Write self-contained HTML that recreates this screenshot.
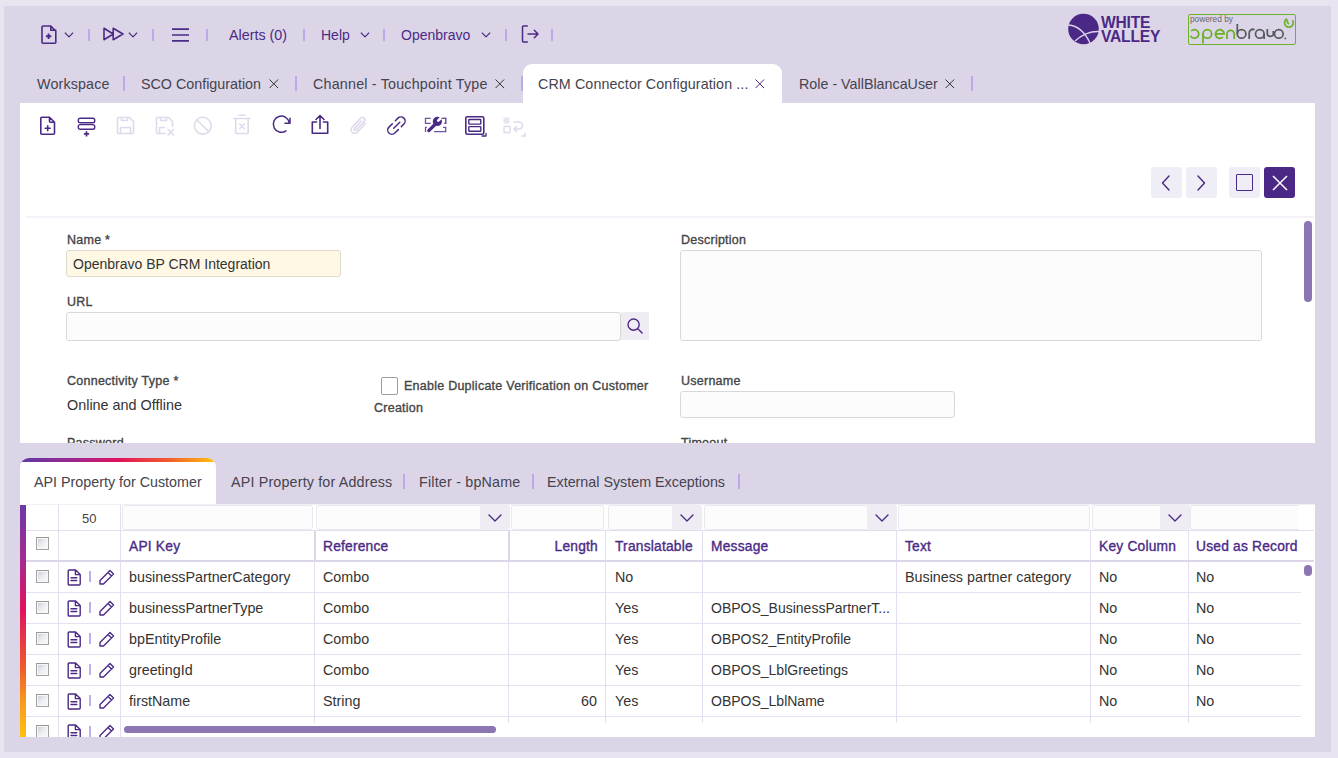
<!DOCTYPE html>
<html><head><meta charset="utf-8">
<style>
*{box-sizing:border-box;margin:0;padding:0}
html,body{width:1338px;height:758px;overflow:hidden}
body{background:#e9e4f0;font-family:"Liberation Sans",sans-serif;position:relative;color:#333}
.a{position:absolute}
#main{left:4px;top:6px;width:1327px;height:746px;background:#dcd5e7}
.sep{position:absolute;width:2px;height:12px;background:#bda9e6}
.mtxt{position:absolute;font-size:14px;color:#4b2a86;white-space:nowrap;line-height:16px}
.ttxt{position:absolute;font-size:14.3px;color:#45434e;white-space:nowrap;line-height:16px}
svg{position:absolute;overflow:visible}
.ic{fill:none;stroke:#4b2a86;stroke-width:1.6;stroke-linecap:round;stroke-linejoin:round}
.dis{fill:none;stroke:#dfd9eb;stroke-width:1.6;stroke-linecap:round;stroke-linejoin:round}
#content{left:20px;top:103px;width:1295px;height:340px;background:#fff;overflow:hidden}
.lbl{position:absolute;font-size:12.5px;color:#454545;-webkit-text-stroke:0.35px #454545;white-space:nowrap;line-height:14px;letter-spacing:0.25px}
.fld{position:absolute;background:#fcfcfc;border:1px solid #d8d8d8;border-radius:3px}
.val{position:absolute;font-size:14px;color:#333;white-space:nowrap;line-height:16px}
#grid{left:20px;top:504px;width:1295px;height:233px;background:#fff;overflow:hidden}
.hl{position:absolute;height:1px;background:#e6e1f1}
.vl{position:absolute;width:1px;background:#e6e1f1}
.hd{position:absolute;font-size:13.8px;color:#4b2a86;-webkit-text-stroke:0.35px #4b2a86;white-space:nowrap;line-height:16px;letter-spacing:0.2px}
.cell{position:absolute;font-size:14.3px;color:#333;white-space:nowrap;line-height:16px}
.cb{position:absolute;width:13px;height:13px;border:1px solid #a3a3a3;border-top-color:#999;background:linear-gradient(135deg,#c7ccd6,#eef0f3 55%,#fafafa);box-shadow:inset 0 0 0 1px #f7f7f7}
.flt{position:absolute;top:1px;height:25px;background:#fcfcfc;border:1px solid #e8e8ec;border-radius:3px}
.dd{position:absolute;top:1px;height:25px;background:#efecf4}
</style></head>
<body>
<div id="main" class="a"></div>

<!-- TOP MENU -->
<svg style="left:40px;top:25px" width="18" height="19" viewBox="0 0 18 19"><path class="ic" d="M2 2a1 1 0 0 1 1-1h7.8l5 5v11.3a1 1 0 0 1-1 1H3a1 1 0 0 1-1-1z M10.8 1v4.3h5"/><path class="ic" style="stroke-width:1.9;stroke-linecap:butt" d="M8.6 8.6v5.4 M5.9 11.3h5.4"/></svg>
<svg style="left:64px;top:32px" width="10" height="6" viewBox="0 0 10 6"><path class="ic" style="stroke-width:1.1" d="M1.2 1l3.8 3.8 3.8-3.8"/></svg>
<div class="sep" style="left:88px;top:29px"></div>
<svg style="left:103px;top:27px" width="21" height="14" viewBox="0 0 21 14"><path class="ic" d="M1 1.3l9.2 5.7L1 12.7z M10.2 1.3l9.8 5.7-9.8 5.7z"/></svg>
<svg style="left:128px;top:32px" width="10" height="6" viewBox="0 0 10 6"><path class="ic" style="stroke-width:1.1" d="M1.2 1l3.8 3.8 3.8-3.8"/></svg>
<div class="sep" style="left:152px;top:29px"></div>
<svg style="left:172px;top:28px" width="17" height="14" viewBox="0 0 17 14"><path class="ic" style="stroke-width:1.7;stroke-linecap:butt" d="M0 1.2h17 M0 7h17 M0 12.8h17"/></svg>
<div class="sep" style="left:206px;top:29px"></div>
<div class="mtxt" style="left:229px;top:27px;font-size:14.3px">Alerts (0)</div>
<div class="sep" style="left:303px;top:29px"></div>
<div class="mtxt" style="left:321px;top:27px">Help</div>
<svg style="left:360px;top:32px" width="10" height="6" viewBox="0 0 10 6"><path class="ic" style="stroke-width:1.1" d="M1.2 1l3.8 3.8 3.8-3.8"/></svg>
<div class="sep" style="left:383px;top:29px"></div>
<div class="mtxt" style="left:401px;top:27px">Openbravo</div>
<svg style="left:481px;top:32px" width="10" height="6" viewBox="0 0 10 6"><path class="ic" style="stroke-width:1.1" d="M1.2 1l3.8 3.8 3.8-3.8"/></svg>
<div class="sep" style="left:505px;top:29px"></div>
<svg style="left:521px;top:25px" width="18" height="18" viewBox="0 0 18 18"><path class="ic" style="stroke-width:1.5" d="M6.3 1H2.5a1 1 0 0 0-1 1v14a1 1 0 0 0 1 1h3.8 M7 9h10 M13.3 5.3L17 9l-3.7 3.7"/></svg>
<div class="sep" style="left:551px;top:29px"></div>

<!-- LOGOS -->
<svg style="left:1068px;top:13px" width="32" height="32" viewBox="0 0 32 32">
<circle cx="15.5" cy="16" r="15.3" fill="#4b2886"/>
<path d="M0.5 12 Q14 13 22 30" stroke="#dcd5e7" stroke-width="1.3" fill="none"/>
<path d="M7 28 Q18 18 31 18.5" stroke="#dcd5e7" stroke-width="1.3" fill="none"/>
</svg>
<div class="a" style="left:1101px;top:16px;font-size:15.6px;font-weight:bold;color:#4b2886;line-height:14px;letter-spacing:-0.2px">WHITE<br>VALLEY</div>
<div class="a" style="left:1188px;top:14px;width:108px;height:31px;border:1px solid #6cb32a;border-radius:2px"></div>
<div class="a" style="left:1190px;top:15px;font-size:8.3px;color:#666;line-height:9px">powered by</div>
<svg style="left:1188px;top:14px" width="100" height="31" viewBox="0 0 100 31"><g fill="none" stroke-width="1.75">
<path stroke="#6bb024" d="M3.2 17.0A4.3 4.3 0 1 1 2.6 21.8"/>
<circle stroke="#6bb024" cx="19.3" cy="19.9" r="4.3"/><path stroke="#6bb024" d="M15.0 19.9V29.5"/>
<path stroke="#6bb024" d="M27.2 19.9H36.1A4.3 4.3 0 1 0 34.9 23.0"/>
<path stroke="#6bb024" d="M39.0 25.0V19.9A3.6 3.6 0 0 1 46.2 19.9V25.0"/>
<circle stroke="#575b5f" cx="53.6" cy="19.9" r="4.3"/><path stroke="#575b5f" d="M49.3 10.0V19.9"/>
<path stroke="#575b5f" d="M61.2 25.0V19.5A3.8 3.8 0 0 1 66.5 15.6"/>
<circle stroke="#575b5f" cx="71.8" cy="19.9" r="4.3"/><path stroke="#575b5f" d="M76.1 19.9V25.0"/>
<path stroke="#575b5f" d="M79.3 15.0V20.5A3.6 3.6 0 0 0 85.3 21.0V17.0"/>
<circle stroke="#575b5f" cx="90.8" cy="19.9" r="4.3"/>
</g><circle fill="#575b5f" cx="97.3" cy="24.4" r="0.9"/></svg>
<svg style="left:1283px;top:17px" width="12" height="12" viewBox="0 0 12 12"><path d="M4 1.8A4.4 4.4 0 1 0 9.5 3.2" stroke="#6cb32a" stroke-width="1.8" fill="none"/><path d="M4.5 2.5Q3.5 5.5 6 7.2" stroke="#6cb32a" stroke-width="1.6" fill="none"/></svg>

<!-- TABS -->
<div class="ttxt" style="left:37px;top:76px;letter-spacing:0.15px">Workspace</div>
<div class="sep" style="left:123px;top:76px;height:15px"></div>
<div class="ttxt" style="left:141px;top:76px">SCO Configuration</div>
<svg style="left:269px;top:79px" width="10" height="10" viewBox="0 0 10 10"><path fill="none" stroke="#333" stroke-width="1" d="M0.5 0.5l8.6 8.6 M9.1 0.5l-8.6 8.6"/></svg>
<div class="sep" style="left:295px;top:76px;height:15px"></div>
<div class="ttxt" style="left:313px;top:76px;letter-spacing:0.2px">Channel - Touchpoint Type</div>
<svg style="left:495px;top:79px" width="10" height="10" viewBox="0 0 10 10"><path fill="none" stroke="#333" stroke-width="1" d="M0.5 0.5l8.6 8.6 M9.1 0.5l-8.6 8.6"/></svg>
<div class="sep" style="left:521px;top:76px;height:15px"></div>
<div class="a" style="left:523px;top:64px;width:259px;height:40px;background:#fff;border-radius:9px 9px 0 0"></div>
<div class="ttxt" style="left:538px;top:76px;letter-spacing:0.1px">CRM Connector Configuration ...</div>
<svg style="left:755px;top:79px" width="10" height="10" viewBox="0 0 10 10"><path fill="none" stroke="#4b2a86" stroke-width="1" d="M0.5 0.5l8.6 8.6 M9.1 0.5l-8.6 8.6"/></svg>
<div class="ttxt" style="left:799px;top:76px">Role - VallBlancaUser</div>
<svg style="left:945px;top:79px" width="10" height="10" viewBox="0 0 10 10"><path fill="none" stroke="#333" stroke-width="1" d="M0.5 0.5l8.6 8.6 M9.1 0.5l-8.6 8.6"/></svg>
<div class="sep" style="left:971px;top:76px;height:15px"></div>

<!-- CONTENT -->
<div id="content" class="a">
</div>
<!-- TOOLBAR -->
<svg style="left:39px;top:116px" width="18" height="19" viewBox="0 0 18 19"><path class="ic" d="M1.8 2.3a1 1 0 0 1 1-1h7.7l5 5v11a1 1 0 0 1-1 1h-11.7a1 1 0 0 1-1-1z M10.5 1.3v4a1 1 0 0 0 1 1h4 M8.7 9.8v5 M6.2 12.3h5"/></svg>
<svg style="left:77px;top:117px" width="19" height="20" viewBox="0 0 19 20"><rect class="ic" style="stroke-width:1.4" x="1.3" y="1.2" width="16.4" height="4.6" rx="1.8"/><rect class="ic" style="stroke-width:1.4" x="1.3" y="7.6" width="16.4" height="4.6" rx="1.8"/><path class="ic" style="stroke-width:1.7;stroke-linecap:butt" d="M9.5 14.2v5.3 M6.9 16.8h5.2"/></svg>
<svg style="left:116px;top:116px" width="19" height="19" viewBox="0 0 19 19"><path class="dis" d="M1.5 2.5a1 1 0 0 1 1-1h11l4 4v11a1 1 0 0 1-1 1h-14a1 1 0 0 1-1-1z M5.5 1.5v3h6v-3 M4.5 17.5v-6h10v6"/></svg>
<svg style="left:155px;top:116px" width="20" height="20" viewBox="0 0 20 20"><path class="dis" d="M10 17.5h-7.5a1 1 0 0 1-1-1v-14a1 1 0 0 1 1-1h11l4 4v5 M5.5 1.5v3h6v-3 M4.5 17.5v-6h5 M13 13.5l5.5 5.5 M18.5 13.5l-5.5 5.5"/></svg>
<svg style="left:193px;top:116px" width="20" height="20" viewBox="0 0 20 20"><circle class="dis" cx="9.8" cy="9.7" r="8.4"/><path class="dis" d="M3.8 3.8l12 12"/></svg>
<svg style="left:233px;top:114px" width="18" height="21" viewBox="0 0 18 21"><path class="dis" d="M1 4.5h16 M6 1.3h6 M2.7 4.5v14a1 1 0 0 0 1 1h10.5a1 1 0 0 0 1-1v-14 M6.8 10l4.4 4.4 M11.2 10l-4.4 4.4"/></svg>
<svg style="left:271px;top:116px" width="21" height="19" viewBox="0 0 21 19"><path class="ic" style="stroke-width:1.5" d="M15 14.9A8.1 8.1 0 1 1 18.4 6.9 M19 2.3v5h-5"/></svg>
<svg style="left:311px;top:114px" width="18" height="21" viewBox="0 0 18 21"><path class="ic" d="M5.5 8H1.3v11.3h15.4V8h-4.2 M9 14.5V1.5 M5 5.5l4-4 4 4"/></svg>
<svg style="left:349px;top:116px" width="19" height="20" viewBox="0 0 19 20"><path class="dis" d="M16.2 7.5l-7.8 8.6a3.6 3.6 0 0 1-5.3-4.9l8.5-9a2.4 2.4 0 0 1 3.6 3.3l-8 8.5a1.2 1.2 0 0 1-1.8-1.6l7-7.4"/></svg>
<svg style="left:387px;top:116px" width="21" height="20" viewBox="0 0 21 20"><path class="ic" style="stroke-width:1.5" d="M8.38 4.68L10.93 2.13A4.2 4.2 0 0 1 16.87 8.07L14.32 10.62 M5.38 7.68L1.93 11.13A4.2 4.2 0 0 0 7.87 17.07L11.32 13.62 M6.7 12.2L12.8 6.3"/></svg>
<svg style="left:424px;top:116px" width="23" height="18" viewBox="0 0 23 18"><path fill="none" stroke="#6d559e" stroke-width="1.3" d="M6.7 2.3H1.5V7.3H6.7 M17.4 2.3H21.7V7.3H20.3 M2.9 11.4H1.5V16 M10 15.6H21.7V11.4H19"/><circle cx="13.4" cy="5.4" r="4.6" fill="#4b2a86"/><path stroke="#4b2a86" stroke-width="3.3" stroke-linecap="round" d="M4.8 14.6L11.5 8"/><path stroke="#fff" stroke-width="2.7" stroke-linecap="round" d="M14.2 4.6L18.6 0.2"/><path fill="none" stroke="#6d559e" stroke-width="1.3" d="M17.4 2.3H21.7V7.3H20.3"/></svg>
<svg style="left:465px;top:116px" width="22" height="21" viewBox="0 0 22 21"><rect class="ic" x="0.8" y="0.8" width="18" height="17.5" rx="1.5"/><rect class="ic" x="3.8" y="3.5" width="12" height="4.6" rx="0.5" style="stroke-width:1.4"/><rect class="ic" x="3.8" y="10.6" width="12" height="4.6" rx="0.5" style="stroke-width:1.4"/><path class="ic" style="stroke-width:1.3" d="M21 17.5v2.5h-4"/></svg>
<svg style="left:503px;top:117px" width="23" height="20" viewBox="0 0 23 20"><rect x="0.5" y="0.5" width="6" height="6" fill="#e9e5f3"/><rect class="dis" x="1" y="9.5" width="6" height="6" style="stroke-width:1.3"/><path class="dis" d="M11 5h5a3.5 3.5 0 0 1 0 7h-4 M13.5 9.5l-2.5 2.5 2.5 2.5 M22 16.5v2.5h-3"/></svg>

<!-- NAV BUTTONS -->
<div class="a" style="left:1151px;top:167px;width:31px;height:31px;background:#efedf5;border-radius:3px"></div>
<svg style="left:1159px;top:175px" width="14" height="16" viewBox="0 0 14 16"><path class="ic" style="stroke-width:1.4" d="M10 1L3.5 8 10 15"/></svg>
<div class="a" style="left:1186px;top:167px;width:31px;height:31px;background:#efedf5;border-radius:3px"></div>
<svg style="left:1194px;top:175px" width="14" height="16" viewBox="0 0 14 16"><path class="ic" style="stroke-width:1.4" d="M4 1l6.5 7L4 15"/></svg>
<div class="a" style="left:1229px;top:167px;width:31px;height:31px;background:#efedf5;border-radius:3px"></div>
<div class="a" style="left:1236px;top:174px;width:17px;height:17px;border:1.6px solid #4b2a86;border-radius:1px"></div>
<div class="a" style="left:1264px;top:167px;width:31px;height:31px;background:#4b2886;border-radius:3px"></div>
<svg style="left:1272px;top:175px" width="16" height="16" viewBox="0 0 16 16"><path fill="none" stroke="#fff" stroke-width="1.5" d="M1 1l14 14 M15 1L1 15"/></svg>
<div class="a" style="left:26px;top:216px;width:1288px;height:2px;background:#f5f3f9"></div>

<!-- FORM -->
<div class="lbl" style="left:67px;top:233px">Name *</div>
<div class="fld" style="left:66px;top:250px;width:275px;height:27px;background:#fef8e5;border-color:#dedad0"></div>
<div class="val" style="left:73px;top:256px">Openbravo BP CRM Integration</div>
<div class="lbl" style="left:67px;top:295px">URL</div>
<div class="fld" style="left:66px;top:312px;width:555px;height:29px"></div>
<div class="a" style="left:621px;top:312px;width:28px;height:28px;background:#efecf4"></div>
<svg style="left:627px;top:318px" width="16" height="16" viewBox="0 0 16 16"><circle class="ic" style="stroke-width:1.4" cx="6.6" cy="6.6" r="5.6"/><path class="ic" style="stroke-width:1.4" d="M10.8 10.8l4.3 4.3"/></svg>
<div class="lbl" style="left:681px;top:233px">Description</div>
<div class="fld" style="left:680px;top:250px;width:582px;height:91px"></div>
<div class="lbl" style="left:67px;top:374px">Connectivity Type *</div>
<div class="val" style="left:67px;top:397px;font-size:14.4px">Online and Offline</div>
<div class="a" style="left:381px;top:377px;width:17px;height:18px;border:1px solid #9c9c9c;border-radius:2px;background:#fff"></div>
<div class="lbl" style="left:404px;top:379px">Enable Duplicate Verification on Customer</div>
<div class="lbl" style="left:374px;top:401px">Creation</div>
<div class="lbl" style="left:681px;top:374px">Username</div>
<div class="fld" style="left:680px;top:391px;width:275px;height:26.5px"></div>
<div class="lbl" style="left:67px;top:436px">Password</div>
<div class="lbl" style="left:681px;top:436px">Timeout</div>
<div class="a" style="left:1304px;top:221px;width:8px;height:81px;background:#8b76b3;border-radius:4px"></div>


<!-- SUBTABS -->
<div class="a" style="left:20px;top:443px;width:1295px;height:61px;background:#dcd5e7"></div>
<div class="a" style="left:20px;top:458px;width:196px;height:46px;background:#fff;border-radius:9px 9px 0 0;overflow:hidden">
 <div class="a" style="left:0;top:0;width:196px;height:4px;background:linear-gradient(90deg,#5d3aa6,#a3258a 30%,#e2115f 50%,#f15a2b 75%,#ffc20e)"></div>
</div>
<div class="ttxt" style="left:34px;top:474px">API Property for Customer</div>
<div class="ttxt" style="left:231px;top:474px;letter-spacing:0.17px">API Property for Address</div>
<div class="sep" style="left:403px;top:474px;height:15px"></div>
<div class="ttxt" style="left:419px;top:474px;letter-spacing:0.2px">Filter - bpName</div>
<div class="sep" style="left:532px;top:474px;height:15px"></div>
<div class="ttxt" style="left:547px;top:474px">External System Exceptions</div>
<div class="sep" style="left:738px;top:474px;height:15px"></div>

<!-- GRID -->
<div id="grid" class="a">
<div class="a" style="left:0px;top:1px;width:6px;height:232px;background:linear-gradient(180deg,#6a3ba3 0%,#a82a8f 25%,#e0115f 45%,#f0592d 70%,#f99a1c 85%,#ffc20e 100%)"></div>
<div class="a" style="left:6px;top:0px;width:1289px;height:1px;background:#f1eef6"></div>
<div class="a" style="left:38px;top:1px;width:1px;height:232px;background:#e4def0"></div>
<div class="a" style="left:100px;top:1px;width:1px;height:232px;background:#e4def0"></div>
<div class="a" style="left:294px;top:27px;width:1px;height:192px;background:#e4def0"></div>
<div class="a" style="left:488px;top:27px;width:1px;height:192px;background:#e4def0"></div>
<div class="a" style="left:585px;top:27px;width:1px;height:192px;background:#e4def0"></div>
<div class="a" style="left:682px;top:27px;width:1px;height:192px;background:#e4def0"></div>
<div class="a" style="left:876px;top:27px;width:1px;height:192px;background:#e4def0"></div>
<div class="a" style="left:1070px;top:27px;width:1px;height:192px;background:#e4def0"></div>
<div class="a" style="left:1168px;top:27px;width:1px;height:192px;background:#e4def0"></div>
<div class="a" style="left:294px;top:27px;width:2px;height:30px;background:#ddd6ea"></div>
<div class="a" style="left:488px;top:27px;width:2px;height:30px;background:#ddd6ea"></div>
<div class="a" style="left:6px;top:26px;width:1288px;height:1px;background:#e4def0"></div>
<div class="a" style="left:6px;top:56px;width:1288px;height:2px;background:#ddd6ea"></div>
<div class="a" style="left:6px;top:88px;width:1275px;height:1px;background:#e6e1f1"></div>
<div class="a" style="left:6px;top:119px;width:1275px;height:1px;background:#e6e1f1"></div>
<div class="a" style="left:6px;top:150px;width:1275px;height:1px;background:#e6e1f1"></div>
<div class="a" style="left:6px;top:181px;width:1275px;height:1px;background:#e6e1f1"></div>
<div class="a" style="left:6px;top:212px;width:1275px;height:1px;background:#e6e1f1"></div>
<div class="a" style="left:102px;top:1px;width:191px;height:25px;background:#fcfcfd;border:1px solid #ebe8f0;border-radius:3px"></div>
<div class="a" style="left:296px;top:1px;width:194px;height:25px;background:#fcfcfd;border:1px solid #ebe8f0;border-radius:3px"></div>
<div class="a" style="left:460px;top:1px;width:30px;height:25px;background:#efecf4;border-radius:0 3px 3px 0"></div>
<svg style="left:468px;top:10px" width="14" height="8" viewBox="0 0 14 8"><path class="ic" style="stroke-width:1.4" d="M1 1l6 6 6-6"/></svg>
<div class="a" style="left:491px;top:1px;width:93px;height:25px;background:#fcfcfd;border:1px solid #ebe8f0;border-radius:3px"></div>
<div class="a" style="left:588px;top:1px;width:94px;height:25px;background:#fcfcfd;border:1px solid #ebe8f0;border-radius:3px"></div>
<div class="a" style="left:652px;top:1px;width:30px;height:25px;background:#efecf4;border-radius:0 3px 3px 0"></div>
<svg style="left:660px;top:10px" width="14" height="8" viewBox="0 0 14 8"><path class="ic" style="stroke-width:1.4" d="M1 1l6 6 6-6"/></svg>
<div class="a" style="left:684px;top:1px;width:193px;height:25px;background:#fcfcfd;border:1px solid #ebe8f0;border-radius:3px"></div>
<div class="a" style="left:847px;top:1px;width:30px;height:25px;background:#efecf4;border-radius:0 3px 3px 0"></div>
<svg style="left:855px;top:10px" width="14" height="8" viewBox="0 0 14 8"><path class="ic" style="stroke-width:1.4" d="M1 1l6 6 6-6"/></svg>
<div class="a" style="left:878px;top:1px;width:192px;height:25px;background:#fcfcfd;border:1px solid #ebe8f0;border-radius:3px"></div>
<div class="a" style="left:1072px;top:1px;width:98px;height:25px;background:#fcfcfd;border:1px solid #ebe8f0;border-radius:3px"></div>
<div class="a" style="left:1140px;top:1px;width:30px;height:25px;background:#efecf4;border-radius:0 3px 3px 0"></div>
<svg style="left:1148px;top:10px" width="14" height="8" viewBox="0 0 14 8"><path class="ic" style="stroke-width:1.4" d="M1 1l6 6 6-6"/></svg>
<div class="a" style="left:1170px;top:1px;width:109px;height:25px;background:#fcfcfd;border:1px solid #ebe8f0;border-right:none;border-radius:3px 0 0 3px"></div>
<div class="cell" style="left:62px;top:7px;font-size:13px;color:#444">50</div>
<div class="hd" style="left:109px;top:35px">API Key</div>
<div class="hd" style="left:303px;top:35px">Reference</div>
<div class="hd" style="left:490px;width:88px;text-align:right;top:35px">Length</div>
<div class="hd" style="left:595px;top:35px">Translatable</div>
<div class="hd" style="left:691px;top:35px">Message</div>
<div class="hd" style="left:885px;top:35px">Text</div>
<div class="hd" style="left:1079px;top:35px">Key Column</div>
<div class="hd" style="left:1176px;top:35px">Used as Record</div>
<div class="cb" style="left:16px;top:33px"></div>
<div class="cb" style="left:16px;top:66px"></div>
<svg style="left:47px;top:65px" width="15" height="17" viewBox="0 0 15 17"><path class="ic" style="stroke-width:1.4" d="M1.2 2a1 1 0 0 1 1-1h6.4l4.6 4.6v9.4a1 1 0 0 1-1 1H2.2a1 1 0 0 1-1-1z M8.4 1v4.6h4.6 M4 8.8h5.8 M4 11.5h5.8"/></svg>
<div class="a" style="left:69px;top:67px;width:1.5px;height:11px;background:#c0aee6"></div>
<svg style="left:78px;top:65px" width="17" height="17" viewBox="0 0 17 17"><path class="ic" style="stroke-width:1.4" d="M12 1.5l3.5 3.5L5.5 15H2v-3.5z M10 3.5l3.5 3.5"/></svg>
<div class="cell" style="left:109px;top:65px">businessPartnerCategory</div>
<div class="cell" style="left:303px;top:65px">Combo</div>
<div class="cell" style="left:595px;top:65px">No</div>
<div class="cell" style="left:885px;top:65px">Business partner category</div>
<div class="cell" style="left:1079px;top:65px">No</div>
<div class="cell" style="left:1176px;top:65px">No</div>
<div class="cb" style="left:16px;top:97px"></div>
<svg style="left:47px;top:96px" width="15" height="17" viewBox="0 0 15 17"><path class="ic" style="stroke-width:1.4" d="M1.2 2a1 1 0 0 1 1-1h6.4l4.6 4.6v9.4a1 1 0 0 1-1 1H2.2a1 1 0 0 1-1-1z M8.4 1v4.6h4.6 M4 8.8h5.8 M4 11.5h5.8"/></svg>
<div class="a" style="left:69px;top:98px;width:1.5px;height:11px;background:#c0aee6"></div>
<svg style="left:78px;top:96px" width="17" height="17" viewBox="0 0 17 17"><path class="ic" style="stroke-width:1.4" d="M12 1.5l3.5 3.5L5.5 15H2v-3.5z M10 3.5l3.5 3.5"/></svg>
<div class="cell" style="left:109px;top:96px">businessPartnerType</div>
<div class="cell" style="left:303px;top:96px">Combo</div>
<div class="cell" style="left:595px;top:96px">Yes</div>
<div class="cell" style="left:691px;top:96px;font-size:14px">OBPOS_BusinessPartnerT...</div>
<div class="cell" style="left:1079px;top:96px">No</div>
<div class="cell" style="left:1176px;top:96px">No</div>
<div class="cb" style="left:16px;top:128px"></div>
<svg style="left:47px;top:127px" width="15" height="17" viewBox="0 0 15 17"><path class="ic" style="stroke-width:1.4" d="M1.2 2a1 1 0 0 1 1-1h6.4l4.6 4.6v9.4a1 1 0 0 1-1 1H2.2a1 1 0 0 1-1-1z M8.4 1v4.6h4.6 M4 8.8h5.8 M4 11.5h5.8"/></svg>
<div class="a" style="left:69px;top:129px;width:1.5px;height:11px;background:#c0aee6"></div>
<svg style="left:78px;top:127px" width="17" height="17" viewBox="0 0 17 17"><path class="ic" style="stroke-width:1.4" d="M12 1.5l3.5 3.5L5.5 15H2v-3.5z M10 3.5l3.5 3.5"/></svg>
<div class="cell" style="left:109px;top:127px">bpEntityProfile</div>
<div class="cell" style="left:303px;top:127px">Combo</div>
<div class="cell" style="left:595px;top:127px">Yes</div>
<div class="cell" style="left:691px;top:127px;font-size:14px">OBPOS2_EntityProfile</div>
<div class="cell" style="left:1079px;top:127px">No</div>
<div class="cell" style="left:1176px;top:127px">No</div>
<div class="cb" style="left:16px;top:159px"></div>
<svg style="left:47px;top:158px" width="15" height="17" viewBox="0 0 15 17"><path class="ic" style="stroke-width:1.4" d="M1.2 2a1 1 0 0 1 1-1h6.4l4.6 4.6v9.4a1 1 0 0 1-1 1H2.2a1 1 0 0 1-1-1z M8.4 1v4.6h4.6 M4 8.8h5.8 M4 11.5h5.8"/></svg>
<div class="a" style="left:69px;top:160px;width:1.5px;height:11px;background:#c0aee6"></div>
<svg style="left:78px;top:158px" width="17" height="17" viewBox="0 0 17 17"><path class="ic" style="stroke-width:1.4" d="M12 1.5l3.5 3.5L5.5 15H2v-3.5z M10 3.5l3.5 3.5"/></svg>
<div class="cell" style="left:109px;top:158px">greetingId</div>
<div class="cell" style="left:303px;top:158px">Combo</div>
<div class="cell" style="left:595px;top:158px">Yes</div>
<div class="cell" style="left:691px;top:158px;font-size:14px">OBPOS_LblGreetings</div>
<div class="cell" style="left:1079px;top:158px">No</div>
<div class="cell" style="left:1176px;top:158px">No</div>
<div class="cb" style="left:16px;top:190px"></div>
<svg style="left:47px;top:189px" width="15" height="17" viewBox="0 0 15 17"><path class="ic" style="stroke-width:1.4" d="M1.2 2a1 1 0 0 1 1-1h6.4l4.6 4.6v9.4a1 1 0 0 1-1 1H2.2a1 1 0 0 1-1-1z M8.4 1v4.6h4.6 M4 8.8h5.8 M4 11.5h5.8"/></svg>
<div class="a" style="left:69px;top:191px;width:1.5px;height:11px;background:#c0aee6"></div>
<svg style="left:78px;top:189px" width="17" height="17" viewBox="0 0 17 17"><path class="ic" style="stroke-width:1.4" d="M12 1.5l3.5 3.5L5.5 15H2v-3.5z M10 3.5l3.5 3.5"/></svg>
<div class="cell" style="left:109px;top:189px">firstName</div>
<div class="cell" style="left:303px;top:189px">String</div>
<div class="cell" style="left:490px;width:87px;text-align:right;top:189px">60</div>
<div class="cell" style="left:595px;top:189px">Yes</div>
<div class="cell" style="left:691px;top:189px;font-size:14px">OBPOS_LblName</div>
<div class="cell" style="left:1079px;top:189px">No</div>
<div class="cell" style="left:1176px;top:189px">No</div>
<div class="cb" style="left:16px;top:221px"></div>
<svg style="left:47px;top:220px" width="15" height="17" viewBox="0 0 15 17"><path class="ic" style="stroke-width:1.4" d="M1.2 2a1 1 0 0 1 1-1h6.4l4.6 4.6v9.4a1 1 0 0 1-1 1H2.2a1 1 0 0 1-1-1z M8.4 1v4.6h4.6 M4 8.8h5.8 M4 11.5h5.8"/></svg>
<div class="a" style="left:69px;top:222px;width:1.5px;height:11px;background:#c0aee6"></div>
<svg style="left:78px;top:220px" width="17" height="17" viewBox="0 0 17 17"><path class="ic" style="stroke-width:1.4" d="M12 1.5l3.5 3.5L5.5 15H2v-3.5z M10 3.5l3.5 3.5"/></svg>
<div class="a" style="left:104px;top:222px;width:372px;height:7px;background:#8b76b3;border-radius:4px"></div>
<div class="a" style="left:1284px;top:61px;width:8px;height:11px;background:#8b76b3;border-radius:4px"></div>
</div>
</body></html>
